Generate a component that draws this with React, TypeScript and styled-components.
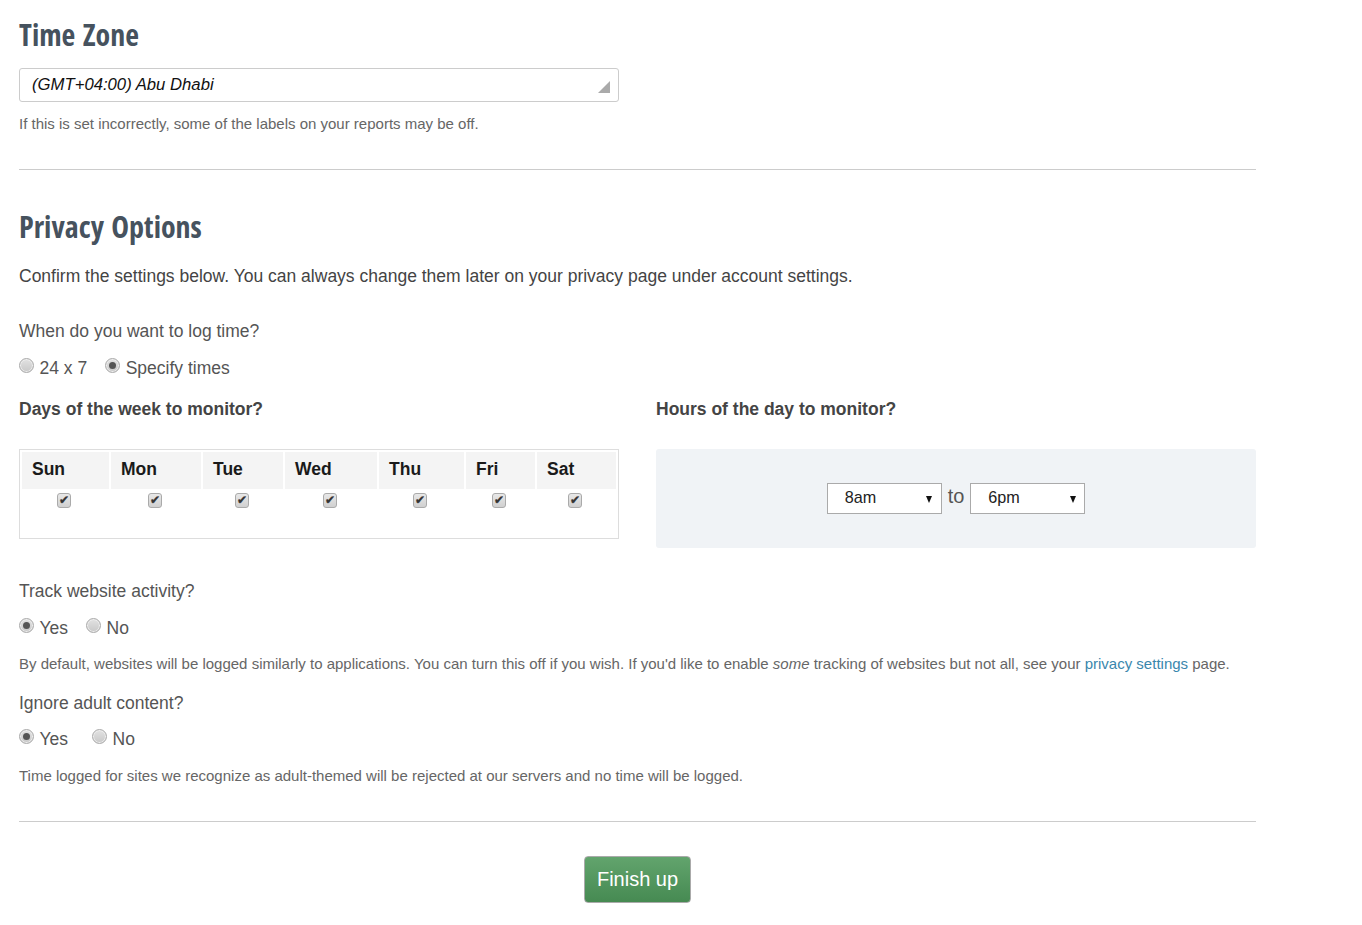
import styled, { createGlobalStyle } from 'styled-components';

const GlobalStyle = createGlobalStyle`
    html, body {
        margin: 0;
        padding: 0;
        background: #fff;
    }
    body {
        font-family: "Liberation Sans", Arial, sans-serif;
        font-size: 17.5px;
        line-height: 25px;
        color: #444;
    }
`;

const Page = styled.div`
    width: 1237px;
    padding: 15px 0 22px 19px;
`;

const Heading = styled.h2`
    margin: 0;
    font-family: "Open Sans", sans-serif;
    font-size: 30px;
    line-height: 40px;
    font-weight: 700;
    font-stretch: 75%;
    word-spacing: 2px;
    color: #46525e;
`;

const TimeZoneBox = styled.div`
    position: relative;
    box-sizing: border-box;
    width: 600px;
    height: 34px;
    margin-top: 13px;
    padding-left: 12px;
    border: 1px solid #ccc;
    border-radius: 3px;
    font-size: 16.7px;
    font-style: italic;
    line-height: 31px;
    color: #111;
`;

const ResizeCorner = styled.span`
    position: absolute;
    right: 8px;
    bottom: 8px;
    width: 0;
    height: 0;
    border-style: solid;
    border-width: 0 0 12px 12px;
    border-color: transparent transparent #aaa transparent;
`;

const Hint = styled.p<{ $top: number }>`
    margin: ${(p) => p.$top}px 0 0;
    font-size: 15px;
    line-height: 20px;
    color: #666;
`;

const Rule = styled.hr<{ $top: number }>`
    margin: ${(p) => p.$top}px 0 0;
    border: 0;
    border-top: 1px solid #ccc;
`;

const PrivacyHeading = styled(Heading)`
    margin-top: 37px;
`;

const Intro = styled.p`
    margin: 17px 0 0;
`;

const Question = styled.div<{ $top: number }>`
    margin-top: ${(p) => p.$top}px;
    color: #555;
`;

const RadioRow = styled.div<{ $top: number }>`
    display: flex;
    align-items: center;
    height: 25px;
    margin-top: ${(p) => p.$top}px;
`;

const RadioLabel = styled.label<{ $gap: number }>`
    display: flex;
    align-items: center;
    margin-right: ${(p) => p.$gap}px;
    color: #555;
`;

const Radio = styled.input.attrs({ type: 'radio', readOnly: true })`
    appearance: none;
    box-sizing: border-box;
    width: 15px;
    height: 15px;
    margin: -6px 5.5px 0 0;
    border: 1px solid #aaa;
    border-radius: 50%;
    background: linear-gradient(#e2e2e2, #c8c8c8);
    box-shadow: inset 0 0 0 1px #eee;
    position: relative;
    &:checked::after {
        content: '';
        position: absolute;
        top: 3px;
        left: 3px;
        width: 7px;
        height: 7px;
        border-radius: 50%;
        background: #555;
    }
`;

const Columns = styled.div`
    display: grid;
    grid-template-columns: 600px 600px;
    column-gap: 37px;
    margin-top: 16px;
`;

const ColumnTitle = styled.div`
    font-weight: 700;
    margin-bottom: 27px;
`;

const DaysTable = styled.div`
    box-sizing: border-box;
    height: 90px;
    padding: 2px;
    border: 1px solid #ddd;
    display: grid;
    grid-template-columns: 87px 90px 80px 92px 85px 69px 79px;
    grid-template-rows: 37px 1fr;
    column-gap: 2px;
`;

const DayHead = styled.div`
    padding-left: 10px;
    background: #f4f4f4;
    font-weight: 700;
    line-height: 34px;
    color: #1a1a1a;
`;

const DayCell = styled.div`
    display: flex;
    justify-content: center;
    padding: 4px 3px 0 0;
`;

const DayCheck = styled.input.attrs({ type: 'checkbox', readOnly: true })`
    appearance: none;
    box-sizing: border-box;
    width: 14px;
    height: 15px;
    margin: 0;
    border: 1px solid #aaa;
    border-radius: 3px;
    background: linear-gradient(#e8e8e8, #d0d0d0);
    position: relative;
    &::after {
        content: '✔';
        position: absolute;
        top: 0;
        left: 1px;
        font-size: 12px;
        line-height: 13px;
        color: #333;
        -webkit-text-stroke: 0.4px #333;
    }
`;

const HoursPanel = styled.div`
    height: 99px;
    border-radius: 3px;
    background: #f0f3f6;
    display: flex;
    justify-content: center;
    align-items: center;
    gap: 6px;
`;

const HourSelect = styled.div`
    position: relative;
    box-sizing: border-box;
    width: 115px;
    height: 31px;
    padding-left: 17px;
    border: 1px solid #aaa;
    background: #fff;
    font-size: 16.2px;
    line-height: 27px;
    color: #222;
    &::after {
        content: '';
        position: absolute;
        right: 8.5px;
        top: 12px;
        border-style: solid;
        border-width: 7px 3.5px 0 3.5px;
        border-color: #111 transparent transparent transparent;
    }
`;

const ToWord = styled.span`
    margin-top: -5px;
    font-size: 20px;
    color: #555;
`;

const Link = styled.a`
    color: #3a87ad;
    text-decoration: none;
`;

const Footer = styled.div`
    display: flex;
    justify-content: center;
    margin-top: 34px;
`;

const FinishButton = styled.button`
    box-sizing: border-box;
    width: 107px;
    height: 47px;
    padding: 0;
    border: 1px solid #aaa;
    border-radius: 4px;
    background: linear-gradient(#62a46d, #468a52);
    font-family: inherit;
    font-size: 20px;
    color: #fff;
`;

const days = [
    'Sun', 'Mon', 'Tue', 'Wed', 'Thu', 'Fri', 'Sat',
];

export default function App() {
    return (
        <>
            <GlobalStyle />
            <Page>
                <Heading>Time Zone</Heading>
                <TimeZoneBox>
                    (GMT+04:00) Abu Dhabi
                    <ResizeCorner />
                </TimeZoneBox>
                <Hint $top={12}>If this is set incorrectly, some of the labels on your reports may be off.</Hint>
                <Rule $top={35} />

                <PrivacyHeading>Privacy Options</PrivacyHeading>
                <Intro>Confirm the settings below. You can always change them later on your privacy page under account settings.</Intro>

                <Question $top={30}>When do you want to log time?</Question>
                <RadioRow $top={12}>
                    <RadioLabel $gap={18}><Radio name="log" />24 x 7</RadioLabel>
                    <RadioLabel $gap={0}><Radio name="log" defaultChecked />Specify times</RadioLabel>
                </RadioRow>

                <Columns>
                    <div>
                        <ColumnTitle>Days of the week to monitor?</ColumnTitle>
                        <DaysTable>
                            {days.map((d) => <DayHead key={d}>{d}</DayHead>)}
                            {days.map((d) => (
                                <DayCell key={d}><DayCheck defaultChecked /></DayCell>
                            ))}
                        </DaysTable>
                    </div>
                    <div>
                        <ColumnTitle>Hours of the day to monitor?</ColumnTitle>
                        <HoursPanel>
                            <HourSelect>8am</HourSelect>
                            <ToWord>to</ToWord>
                            <HourSelect>6pm</HourSelect>
                        </HoursPanel>
                    </div>
                </Columns>

                <Question $top={31}>Track website activity?</Question>
                <RadioRow $top={12}>
                    <RadioLabel $gap={18}><Radio name="web" defaultChecked />Yes</RadioLabel>
                    <RadioLabel $gap={0}><Radio name="web" />No</RadioLabel>
                </RadioRow>
                <Hint $top={13}>
                    By default, websites will be logged similarly to applications. You can turn this off if you wish. If you'd like to enable <em>some</em> tracking of websites but not all, see your <Link href="#">privacy settings</Link> page.
                </Hint>

                <Question $top={17}>Ignore adult content?</Question>
                <RadioRow $top={11}>
                    <RadioLabel $gap={24}><Radio name="adult" defaultChecked />Yes</RadioLabel>
                    <RadioLabel $gap={0}><Radio name="adult" />No</RadioLabel>
                </RadioRow>
                <Hint $top={14}>Time logged for sites we recognize as adult-themed will be rejected at our servers and no time will be logged.</Hint>

                <Rule $top={35} />
                <Footer>
                    <FinishButton>Finish up</FinishButton>
                </Footer>
            </Page>
        </>
    );
}
